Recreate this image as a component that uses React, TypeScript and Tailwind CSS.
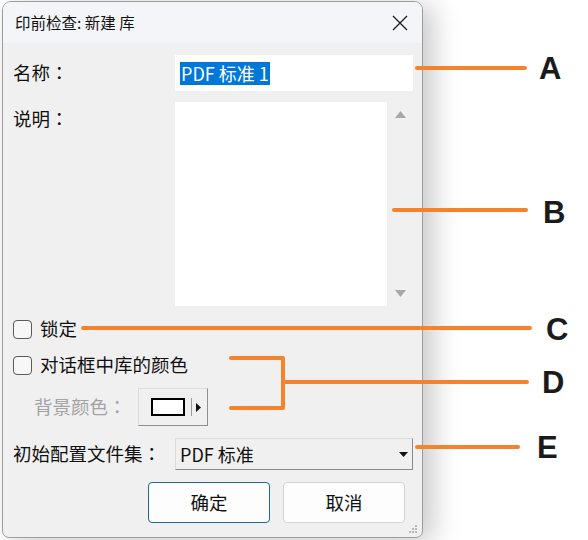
import React from "react";

const font = { fontFamily: '"Noto Sans CJK SC", "Noto Sans", sans-serif' };

// fullwidth colon drawn centered like the Windows UI font does
const Colon = () => (
  <span style={{ fontFamily: '"Noto Sans CJK TC", "Noto Sans CJK JP", sans-serif' }}>：</span>
);

const Checkbox = ({ label }: { label: string }) => (
  <label className="flex items-center gap-[8px] h-[24px]">
    <span className="w-[19px] h-[19px] rounded-[4px] border border-[#5a5a5a] bg-[#f7f7f7]" />
    <span className="text-[18.5px] text-[#111]">{label}</span>
  </label>
);

const Annotations = () => (
  <svg className="absolute inset-0 pointer-events-none" width="588" height="540">
    <g stroke="#f5832b" strokeWidth="4" strokeLinecap="round" fill="none">
      <line x1="417" y1="68" x2="525" y2="68" />
      <line x1="394" y1="210" x2="526" y2="210" />
      <line x1="83" y1="328" x2="530" y2="328" />
      <polyline points="231,358 283,358 283,408 231,408" strokeLinejoin="round" />
      <line x1="283" y1="382" x2="527" y2="382" />
      <line x1="417" y1="447" x2="518" y2="447" />
    </g>
  </svg>
);

const Letter = ({ ch, cls }: { ch: string; cls: string }) => (
  <span
    className={`absolute text-[31px] font-bold text-[#1b1b1b] leading-none ${cls}`}
    style={{ fontFamily: '"Liberation Sans", Arial, sans-serif' }}
  >
    {ch}
  </span>
);

export default function App() {
  return (
    <div className="relative w-[588px] h-[540px] bg-white overflow-hidden" style={font}>
      <div className="ml-[2px] mt-[1px] w-[421px] h-[537px] flex flex-col rounded-t-[9px] rounded-b-[7px] border border-[#9c9c9c] bg-[#f0f0f0] overflow-hidden shadow-[10px_4px_28px_rgba(0,0,0,0.22)]">
        {/* title bar */}
        <div className="h-[41px] shrink-0 flex items-center justify-between pl-[12px] pr-[14px] bg-[#f4f5f8]">
          <span className="text-[15.5px] text-[#111]">印前检查: 新建 库</span>
          <svg width="16" height="16" viewBox="0 0 16 16">
            <path d="M1 1 L15 15 M15 1 L1 15" stroke="#1a1a1a" strokeWidth="1.3" />
          </svg>
        </div>

        {/* body */}
        <div className="flex flex-col pl-[10px] pr-[9px] pt-[12px]">
          <div className="flex items-center h-[36px]">
            <span className="w-[162px] text-[18.5px] text-[#111]">名称<Colon /></span>
            <div className="flex-1 h-[36px] bg-white flex items-center pl-[5px]">
              <span className="bg-[#0078d7] text-white text-[18px] leading-[23px] px-[1px]">PDF 标准 1</span>
            </div>
          </div>

          <div className="flex mt-[11px] h-[204px]">
            <span className="w-[162px] text-[18.5px] text-[#111] pt-[3px]">说明<Colon /></span>
            <div className="w-[212px] h-full bg-white" />
            <div className="flex-1 flex flex-col items-center justify-between py-[9px]">
              <svg width="11" height="7" viewBox="0 0 11 7"><path d="M5.5 0 L11 7 L0 7 Z" fill="#a8a8a8" /></svg>
              <svg width="11" height="7" viewBox="0 0 11 7"><path d="M0 0 L11 0 L5.5 7 Z" fill="#a8a8a8" /></svg>
            </div>
          </div>

          <div className="mt-[11px]">
            <Checkbox label="锁定" />
          </div>
          <div className="mt-[12px]">
            <Checkbox label="对话框中库的颜色" />
          </div>

          <div className="flex items-center mt-[11px] h-[38px]">
            <span className="w-[125px] pl-[21px] text-[18.5px] text-[#a3a3a3]">背景颜色<Colon /></span>
            <div className="w-[70px] h-[38px] flex items-center pl-[12px] bg-[#f0f0f0] border border-[#dcdcdc] border-r-[#8f8f8f] border-b-[#8f8f8f]">
              <span className="w-[34px] h-[18px] border-2 border-black bg-white" />
              <span className="ml-[6px] w-px h-[18px] bg-[#9a9a9a]" />
              <svg className="ml-[4px]" width="5" height="9" viewBox="0 0 5 9"><path d="M0 0 L5 4.5 L0 9 Z" fill="#111" /></svg>
            </div>
          </div>

          <div className="flex items-center mt-[12px] h-[32px]">
            <span className="w-[162px] text-[18.5px] text-[#111] whitespace-nowrap">初始配置文件集<Colon /></span>
            <div className="flex-1 h-[32px] flex items-center justify-between pl-[4px] pr-[4px] bg-[#f0f0f0] border border-[#dadada] border-r-[#8a8a8a] border-b-[#8a8a8a]">
              <span className="text-[18px] text-[#111]">PDF 标准</span>
              <svg width="9" height="5" viewBox="0 0 9 5"><path d="M0 0 L9 0 L4.5 5 Z" fill="#111" /></svg>
            </div>
          </div>

          <div className="flex mt-[12px] pl-[135px] gap-[13px]">
            <button className="w-[122px] h-[41px] rounded-[4px] border border-[#1d6a97] bg-[#fdfdfd] text-[18.5px] text-[#111]">确定</button>
            <button className="w-[122px] h-[41px] rounded-[4px] border border-[#d3d3d3] bg-[#fdfdfd] text-[18.5px] text-[#111]">取消</button>
          </div>
        </div>

        <div className="mt-auto flex justify-end pr-[4px] pb-[3px]">
          <svg width="10" height="10" viewBox="0 0 10 10" fill="#b5b5b5">
            <rect x="7" y="1" width="2" height="2" />
            <rect x="4" y="4" width="2" height="2" />
            <rect x="7" y="4" width="2" height="2" />
            <rect x="1" y="7" width="2" height="2" />
            <rect x="4" y="7" width="2" height="2" />
            <rect x="7" y="7" width="2" height="2" />
          </svg>
        </div>
      </div>

      <Annotations />
      <Letter ch="A" cls="left-[539px] top-[53px]" />
      <Letter ch="B" cls="left-[543px] top-[197px]" />
      <Letter ch="C" cls="left-[546px] top-[314px]" />
      <Letter ch="D" cls="left-[542px] top-[367px]" />
      <Letter ch="E" cls="left-[537px] top-[432px]" />
    </div>
  );
}
